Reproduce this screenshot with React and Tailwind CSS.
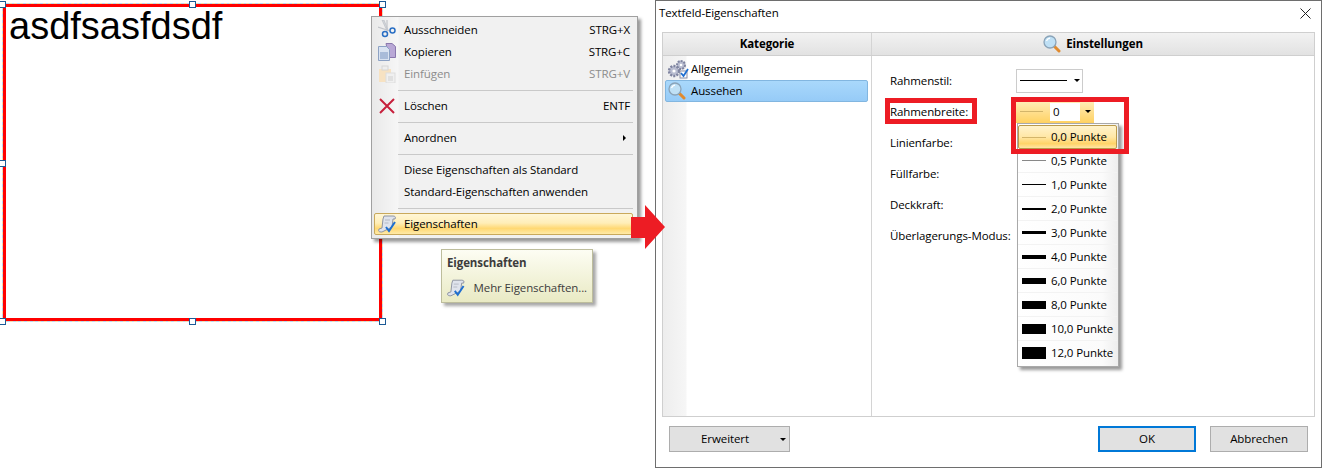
import React from "react";

const font = { fontFamily: '"Open Sans","Noto Sans",sans-serif' };

function Scissors() {
  return (
    <svg width="18" height="20" viewBox="0 0 18 20" fill="none">
      <path d="M4 0l5 11 1-1L6 0z" fill="#d4d7dc" stroke="#b5b9bf" strokeWidth="0.6" />
      <path d="M9 0v10" stroke="#c2c5ca" strokeWidth="1.200" />
      <path d="M0 7l9 3 3 1" stroke="#c2c5ca" strokeWidth="1.200" />
      <circle cx="7" cy="14" r="2.500" stroke="#2a6fc4" strokeWidth="1.500" />
      <circle cx="14.500" cy="10.500" r="2.500" stroke="#2a6fc4" strokeWidth="1.500" />
    </svg>
  );
}
function CopyIcon() {
  return (
    <svg width="18" height="18" viewBox="0 0 18 18">
      <path d="M8 .5h6l3.500 3v11H11z" fill="#b9a8d6" stroke="#8a78ad" />
      <path d="M.5 3.500h8l3 3v11H.5z" fill="#d9e3f1" stroke="#8da2c4" />
      <rect x="2" y="9" width="8" height="7" fill="#a9bcd9" />
    </svg>
  );
}
function PasteIcon() {
  return (
    <svg width="18" height="18" viewBox="0 0 18 18">
      <rect x="1" y="4" width="12" height="13" fill="#f7e2c2" />
      <rect x="4" y="1" width="6" height="4" fill="#eeeeee" stroke="#d6d6d6" />
      <rect x="8" y="8" width="9" height="10" fill="#f0f0f0" stroke="#dddddd" />
      <rect x="10" y="11" width="5" height="5" fill="#e0e0e0" />
    </svg>
  );
}
function DeleteIcon() {
  return (
    <svg width="16" height="16" viewBox="0 0 16 16">
      <path d="M1 1l14 14M15 1L1 15" stroke="#c7203c" strokeWidth="2" />
    </svg>
  );
}
function PropsIcon() {
  return (
    <svg width="19" height="18" viewBox="0 0 19 18">
      <path d="M6 1h9c2 0 3 1 2 3h-2l-1 8-10 5H3c-2 0-3-1-2-3l3-1 1-9z" fill="#dfe3ec" stroke="#8e94a3" />
      <path d="M7 5h5M6.500 8h4" stroke="#b5bac5" />
      <path d="M8 12l3 4 6-9" fill="none" stroke="#1f6fd0" strokeWidth="2" />
    </svg>
  );
}
function GearIcon() {
  return (
    <svg width="22" height="20" viewBox="0 0 22 20">
      <circle cx="14" cy="6" r="4" fill="#b9bdd0" stroke="#7f84a0" strokeWidth="2" strokeDasharray="2 1" />
      <circle cx="14" cy="6" r="1.300" fill="#fff" />
      <circle cx="7" cy="12" r="5" fill="#b9bdd0" stroke="#7f84a0" strokeWidth="2.400" strokeDasharray="2 1.200" />
      <circle cx="7" cy="12" r="1.600" fill="#fff" />
      <rect x="13" y="12" width="7" height="7" fill="#fff" stroke="#8a8fa5" />
      <path d="M14 14l2.500 3 4.500-7" fill="none" stroke="#1f6fd0" strokeWidth="1.800" />
    </svg>
  );
}
function Magnifier() {
  return (
    <svg width="18" height="18" viewBox="0 0 18 18">
      <path d="M11 11l5 5" stroke="#e08a2e" strokeWidth="3" strokeLinecap="round" />
      <circle cx="7" cy="7" r="6" fill="#bfe0f5" stroke="#8aa3b8" strokeWidth="1.300" />
      <path d="M3.500 6c.5-1.500 1.500-2.500 3.500-2.800" stroke="#fff" strokeWidth="1.300" fill="none" />
    </svg>
  );
}
function Caret() {
  return <span className="block w-0 h-0 border-x-[3px] border-x-transparent border-t-[3px] border-t-black" />;
}

function MenuRow({ icon, label, shortcut, disabled, arrow }) {
  return (
    <div className={`h-[22px] flex items-center whitespace-nowrap ${disabled ? "text-[#8c8c8c]" : "text-black"}`}>
      <span className="w-[25px] flex justify-center shrink-0">{icon}</span>
      <span className="ml-[5px] flex-1">{label}</span>
      {shortcut && <span className="mr-[3px]">{shortcut}</span>}
      {arrow && (
        <span className="mr-[7px] w-0 h-0 border-y-[3px] border-y-transparent border-l-[3px] border-l-black" />
      )}
    </div>
  );
}
function MenuSep() {
  return (
    <div className="h-[10px] flex items-center pl-[24px]">
      <span className="block h-px w-full bg-[#c9c9c9]" />
    </div>
  );
}

function ContextMenu() {
  return (
    <div
      style={font}
      className="absolute left-[371px] top-[16px] w-[267px] h-[223px] border border-[#a0a0a0] pt-[2px] pl-[2px] pr-[4px] text-[11.5px] tracking-[-0.1px] shadow-[3px_3px_3px_rgba(0,0,0,0.4)] bg-[linear-gradient(to_right,#e9e9e9_0px,#f6f6f6_26px,#f1f1f1_27px)]"
    >
      <MenuRow icon={<Scissors />} label="Ausschneiden" shortcut="STRG+X" />
      <MenuRow icon={<CopyIcon />} label="Kopieren" shortcut="STRG+C" />
      <MenuRow icon={<PasteIcon />} label="Einfügen" shortcut="STRG+V" disabled />
      <MenuSep />
      <MenuRow icon={<DeleteIcon />} label="Löschen" shortcut="ENTF" />
      <MenuSep />
      <MenuRow label="Anordnen" arrow />
      <MenuSep />
      <MenuRow label="Diese Eigenschaften als Standard" />
      <MenuRow label="Standard-Eigenschaften anwenden" />
      <MenuSep />
      <div className="h-[22px] flex items-center rounded-[2px] border border-[#c9a95c] bg-[linear-gradient(to_bottom,#fff6d6,#ffeeb8_45%,#ffd873_72%,#ffeaa8)] text-black">
        <span className="w-[24px] flex justify-center shrink-0"><PropsIcon /></span>
        <span className="ml-[5px]">Eigenschaften</span>
      </div>
    </div>
  );
}

function Tooltip() {
  return (
    <div
      style={font}
      className="absolute left-[441px] top-[249px] w-[152px] h-[54px] border border-[#bdbd9c] text-[11.5px] tracking-[-0.1px] text-[#3c3c3c] whitespace-nowrap shadow-[3px_3px_3px_rgba(0,0,0,0.35)] bg-[linear-gradient(to_bottom,#fdfdf3,#e9eac4)] px-[5px] pt-[4px]"
    >
      <div className="font-bold h-[18px] flex items-center">Eigenschaften</div>
      <div className="mt-[4px] h-[24px] flex items-center">
        <PropsIcon />
        <span className="ml-[8px]">Mehr Eigenschaften...</span>
      </div>
    </div>
  );
}

function Swatch({ h, color }) {
  return (
    <span className="w-[24px] flex items-center shrink-0">
      <span className="block w-full" style={{ height: h, background: color }} />
    </span>
  );
}

const sizes = [
  ["0,5 Punkte", 1, "#888"],
  ["1,0 Punkte", 1, "#000"],
  ["2,0 Punkte", 2, "#000"],
  ["3,0 Punkte", 3, "#000"],
  ["4,0 Punkte", 4, "#000"],
  ["6,0 Punkte", 6, "#000"],
  ["8,0 Punkte", 8, "#000"],
  ["10,0 Punkte", 10, "#000"],
  ["12,0 Punkte", 12, "#000"],
];

function Dropdown() {
  return (
    <div className="absolute left-[361px] top-[122px] w-[102px] h-[244px] border border-[#a9a9a9] pt-px pr-px whitespace-nowrap text-black shadow-[3px_3px_3px_rgba(0,0,0,0.4)] bg-[linear-gradient(to_right,#ffffff_0px,#fbfbfb_84px,#eeeeee_100px)]">
      <div className="h-[24px] flex items-center pl-[3px] rounded-[2px] border border-[#b99a4c] bg-[linear-gradient(to_bottom,#fff3cc,#ffe7a6_50%,#ffd468_80%,#ffe6a6)]">
        <Swatch h={1} color="#d3b56a" />
        <span className="ml-[5px]">0,0 Punkte</span>
      </div>
      {sizes.map(([label, h, color]) => (
        <div key={label} className="h-[24px] flex items-center pl-[4px] border-b border-b-[#f3f3f3] last:border-b-0">
          <Swatch h={h} color={color} />
          <span className="ml-[5px]">{label}</span>
        </div>
      ))}
    </div>
  );
}

function Row({ label, children }) {
  return (
    <div className="h-[31px] flex items-center">
      <span className="w-[126px] shrink-0 whitespace-nowrap">{label}</span>
      {children}
    </div>
  );
}

function Dialog() {
  return (
    <div
      style={font}
      className="absolute left-[655px] top-0 w-[667px] h-[468px] border border-[#6e6e6e] bg-white text-[11.5px] tracking-[-0.1px] text-black flex flex-col"
    >
      <div className="h-[31px] flex items-center justify-between pl-[3px] pr-[10px] shrink-0">
        <span className="-mt-[7px]">Textfeld-Eigenschaften</span>
        <svg className="-mt-[7px]" width="11" height="11" viewBox="0 0 11 11">
          <path d="M0.500 0.500l10 10M10.500 0.500l-10 10" stroke="#222" />
        </svg>
      </div>
      <div className="ml-[6px] w-[653px] h-[385px] border border-[#cfcfcf] flex flex-col shrink-0">
        <div className="h-[23px] flex shrink-0 font-bold border-b border-b-[#cfcfcf] bg-[linear-gradient(to_bottom,#f2f2f2,#e2e2e2)]">
          <div className="w-[209px] flex items-center justify-center border-r border-r-[#d4d4d4]">Kategorie</div>
          <div className="flex-1 flex items-center justify-center gap-[5px]">
            <Magnifier />
            <span>Einstellungen</span>
          </div>
        </div>
        <div className="flex-1 flex min-h-0">
          <div className="w-[209px] border-r border-r-[#d4d4d4] pt-[2px] pl-[2px] pr-[3px] bg-[linear-gradient(to_right,#ededed_0px,#f6f6f6_23px,#ffffff_24px)]">
            <div className="h-[22px] flex items-center pl-[2px]">
              <GearIcon />
              <span className="ml-[2px]">Allgemein</span>
            </div>
            <div className="h-[22px] flex items-center pl-[2px] rounded-[2px] border border-[#82b6e0] bg-[linear-gradient(to_bottom,#a9d8fb,#96cbf7)]">
              <Magnifier />
              <span className="ml-[5px]">Aussehen</span>
            </div>
          </div>
          <div className="flex-1 pl-[18px] pt-[9px]">
            <Row label="Rahmenstil:">
              <div className="w-[67px] h-[24px] border border-[#cccccc] flex items-center pl-[3px]">
                <span className="block w-[47px] h-px bg-black" />
                <span className="ml-[7px]"><Caret /></span>
              </div>
            </Row>
            <Row label="Rahmenbreite:">
              <div className="w-[78px] h-[22px] flex items-center pl-[4px] bg-[linear-gradient(to_bottom,#ffeeb8,#ffdf8e_50%,#ffd262)]">
                <span className="block w-[23px] h-px bg-[#d3b56a]" />
                <span className="ml-[7px] w-[30px] h-[18px] bg-white flex items-center pl-[3px]">0</span>
                <span className="ml-[5px]"><Caret /></span>
              </div>
            </Row>
            <Row label="Linienfarbe:" />
            <Row label="Füllfarbe:" />
            <Row label="Deckkraft:" />
            <Row label="Überlagerungs-Modus:" />
          </div>
        </div>
      </div>
      <div className="flex-1 flex items-start pt-[9px] pl-[13px] pr-[13px]">
        <button className="w-[121px] h-[26px] border border-[#adadad] bg-[#e1e1e1] flex items-center">
          <span className="flex-1 text-center">Erweitert</span>
          <span className="mr-[3px]"><Caret /></span>
        </button>
        <button className="ml-auto w-[98px] h-[26px] border-2 border-[#0078d7] bg-[#e1e1e1]">OK</button>
        <button className="ml-[14px] w-[98px] h-[26px] border border-[#adadad] bg-[#e1e1e1]">Abbrechen</button>
      </div>
      <div className="absolute left-[229px] top-[97px] w-[92px] h-[26px] border-[5px] border-[#ed1c24]" />
      <Dropdown />
      <div className="absolute left-[355px] top-[96px] w-[118px] h-[57px] border-[5px] border-[#ed1c24]" />
    </div>
  );
}

function Handle({ className }) {
  return <span className={`absolute w-[7px] h-[7px] bg-white border border-[#1c5a96] ${className}`} />;
}

export default function App() {
  return (
    <div className="relative w-[1322px] h-[468px] overflow-hidden bg-white">
      <div className="absolute left-[2px] top-[3px] w-[381px] h-[319px] p-px bg-[repeating-linear-gradient(45deg,#bcd6ef_0px,#bcd6ef_2px,#f6dcae_2px,#f6dcae_4px)]">
        <div className="w-full h-full border-[3px] border-[#ff0000] bg-white">
          <div className="pl-[3px] text-[38px] leading-[42px] -mt-[2px] text-black" style={{ fontFamily: '"Liberation Sans",Arial,sans-serif' }}>
            asdfsasfdsdf
          </div>
        </div>
      </div>
      <Handle className="-left-px top-px" />
      <Handle className="left-[189px] top-px" />
      <Handle className="left-[379px] top-px" />
      <Handle className="-left-px top-[160px]" />
      <Handle className="left-[379px] top-[160px]" />
      <Handle className="-left-px top-[318px]" />
      <Handle className="left-[189px] top-[318px]" />
      <Handle className="left-[379px] top-[318px]" />
      <Dialog />
      <ContextMenu />
      <Tooltip />
      <svg className="absolute left-[631px] top-[205px]" width="34" height="44" viewBox="0 0 34 44">
        <path d="M0 12h14V0l20 22-20 22V33H0z" fill="#ed1c24" />
      </svg>
    </div>
  );
}
